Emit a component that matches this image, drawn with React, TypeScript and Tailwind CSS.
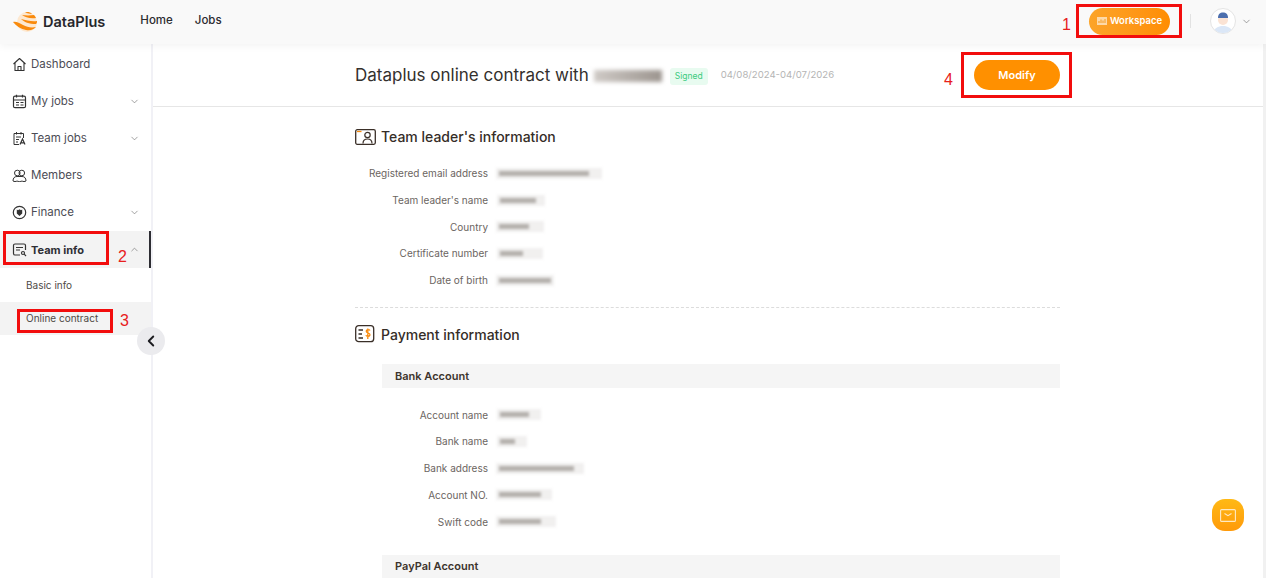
import { ReactNode } from 'react';
import { ChevronDown, ChevronLeft, ChevronUp } from 'lucide-react';

const font = "font-['Inter','Liberation_Sans',sans-serif]";

const HomeIcon = () => (
  <svg width="15" height="15" viewBox="0 0 15 15" fill="none" stroke="#333" strokeWidth="1.1">
    <path d="M1.5 7 7.5 1.5 13.5 7M3 5.8V13.5H12V5.8M6 13.5V9.5H9V13.5" strokeLinejoin="round" />
  </svg>
);

const JobsIcon = () => (
  <svg width="15" height="15" viewBox="0 0 15 15" fill="none" stroke="#333" strokeWidth="1.2">
    <rect x="1.5" y="2.2" width="12" height="11.5" rx="1.5" />
    <path d="M4.5 .8V3.5M10.5 .8V3.5M1.5 6H13.5M4 8.5H7M4 11H7M8.5 8.5H11.5M8.5 11H11.5" />
  </svg>
);

const TeamJobsIcon = () => (
  <svg width="15" height="15" viewBox="0 0 15 15" fill="none" stroke="#333" strokeWidth="1">
    <path d="M7 13.5H2V2.5H11.5V7M4.5 1V3.5M9 1V3.5M4 6H9M4 8.5H7M4 11H6" />
    <path d="M8 13.5 10.5 8 13 13.5M9 11.8H12" strokeWidth="1.2" />
  </svg>
);

const MembersIcon = () => (
  <svg width="15" height="15" viewBox="0 0 15 15" fill="none" stroke="#333" strokeWidth="1">
    <circle cx="5.3" cy="5" r="2.8" />
    <circle cx="9.8" cy="5" r="2.8" />
    <path d="M1 13c0-3 1.5-4.500 4-4.500h5c2.500 0 4 1.500 4 4.500-1 .7-3 .7-4 0-1 .7-4 .7-5 0-1 .7-3 .7-4 0Z" />
  </svg>
);

const FinanceIcon = () => (
  <svg width="15" height="15" viewBox="0 0 15 15" fill="none">
    <circle cx="7.500" cy="7.500" r="6.200" stroke="#333" strokeWidth="1.200" />
    <path d="M4.800 4.500 6 5.200 7.500 4.300 9 5.200 10.200 4.500V8.500L7.500 11 4.800 8.500Z" fill="#333" />
  </svg>
);

const TeamInfoIcon = () => (
  <svg width="15" height="15" viewBox="0 0 15 15" fill="none" stroke="#333" strokeWidth="1.200">
    <path d="M8 13H3a1.500 1.500 0 0 1-1.500-1.500v-8A1.500 1.500 0 0 1 3 2h9a1.500 1.500 0 0 1 1.500 1.500V8" />
    <path d="M4 5.500H11M4 8H8" />
    <circle cx="11" cy="11" r="1.500" />
    <path d="M12.200 12.200 14 14" />
  </svg>
);

const Logo = () => (
  <svg width="28" height="22" viewBox="0 0 28 22" fill="none" className="mt-[1px]">
    <circle cx="15" cy="11" r="10" fill="#fde8d0" />
    <path d="M1 11c3 4 8 7 13 8 5 1 8-1 10-3-5 1-9 0-13-2-4-2-7-4-10-3Z" fill="#f98a0c" />
    <path d="M9 8c3 3 8 5 15 5 1-1 1-2 1-3-5 1-11-1-16-2Z" fill="#f98a0c" />
    <path d="M10 4c3 2 8 4 14 3-.5-1-1-2-2-3-4 .5-8 .5-12 0Z" fill="#f98a0c" />
    <path d="M13 1.500c2 1 5 1.500 7 1-2-1.500-5-2-7-1Z" fill="#f98a0c" />
  </svg>
);

const TeamLeaderIcon = () => (
  <svg width="21" height="16" viewBox="0 0 21 16" fill="none">
    <rect x=".7" y=".7" width="19.600" height="14.600" rx="1.500" stroke="#3a2f28" strokeWidth="1.300" />
    <path d="M2 2.500H6.500" stroke="#f98a0c" strokeWidth="1.300" />
    <circle cx="12.500" cy="6" r="2.700" stroke="#3a2f28" strokeWidth="1.200" />
    <path d="M8 14.500c0-3 1.500-4.500 4.500-4.500s4.500 1.500 4.500 4.500" stroke="#3a2f28" strokeWidth="1.200" />
  </svg>
);

const PaymentIcon = () => (
  <svg width="20" height="18" viewBox="0 0 20 18" fill="none">
    <rect x=".7" y=".7" width="18" height="16" rx="3" stroke="#3a2f28" strokeWidth="1.300" />
    <path d="M3.500 5H8M3.500 9H7M3.500 13H8" stroke="#3a2f28" strokeWidth="1.300" />
    <path d="M15 5.500c-.5-1-3.500-1.300-3.800.6-.3 2.400 4 1.400 3.800 3.800-.2 2-3.500 1.700-4.200.4M12.800 3.500V14" stroke="#f98a0c" strokeWidth="1.300" />
  </svg>
);

// redacted values in the shot are just smudges
const Smudge = ({ width, offset = 0, strong = 22 }: { width: number; offset?: number; strong?: number }) => (
  <div className="relative h-[11px] bg-[#f1f0ef] blur-[1.500px]" style={{ width, marginLeft: offset }}>
    <div className="absolute left-[3px] top-[3px] h-[5px] bg-[#b3afab]" style={{ width: (width * strong) / 40 }} />
  </div>
);

const InfoRow = ({ label, labelWidth, width, offset, strong }: { label: string; labelWidth: string; width: number; offset?: number; strong?: number }) => (
  <div className="flex h-[26.700px] items-center">
    <div className={`${labelWidth} text-right text-[10px] leading-none text-[#6b6561]`}>{label}</div>
    <div className="ml-[8px]">
      <Smudge width={width} offset={offset} strong={strong} />
    </div>
  </div>
);

const NavItem = ({ icon, label, chevron, active }: { icon: ReactNode; label: string; chevron?: 'up' | 'down'; active?: boolean }) => (
  <div className={`flex h-[37px] items-center pl-[12px] ${active ? 'border-r-[2px] border-[#2d2d33] bg-[#f3f3f3] pr-[9px]' : 'pr-[11px]'}`}>
    <span className="flex w-[19px] shrink-0">{icon}</span>
    <span className={`flex-1 ${active ? 'mt-[1px] text-[11px] font-bold text-[#2f2f35]' : 'text-[11.500px] text-[#4c4c55]'}`}>{label}</span>
    {chevron === 'down' && <ChevronDown size={11} strokeWidth={1.500} className="text-[#777]" />}
    {chevron === 'up' && <ChevronUp size={11} strokeWidth={1.500} className="text-[#777]" />}
  </div>
);

const RedBox = ({ className }: { className: string }) => (
  <div className={`pointer-events-none absolute z-20 border-[3px] border-[#f20d0d] ${className}`} />
);

const RedNum = ({ className, children }: { className: string; children: ReactNode }) => (
  <div className={`absolute z-20 font-['Liberation_Sans',sans-serif] text-[16px] leading-none text-[#e8201c] ${className}`}>{children}</div>
);

export default function App() {
  return (
    <div className={`relative flex h-[578px] w-[1266px] flex-col overflow-hidden bg-white ${font}`}>
      <header className="z-10 flex h-[44px] shrink-0 items-center bg-[#f9f9f9] pb-[2px] pl-[12px] pr-[14px] shadow-[0_2px_8px_rgba(0,0,0,0.05)]">
        <Logo />
        <span className="ml-[3px] mt-[1px] text-[14.500px] font-semibold text-[#26262b]">DataPlus</span>
        <span className="ml-[35px] text-[11.500px] font-medium text-[#2b2b30]">Home</span>
        <span className="ml-[22px] text-[11.500px] font-medium text-[#2b2b30]">Jobs</span>
        <div className="ml-auto flex h-[27px] w-[81px] items-center justify-center gap-[3px] rounded-full bg-gradient-to-r from-[#fca428] to-[#ff8d00]">
          <svg width="10" height="8" viewBox="0 0 10 8">
            <rect width="10" height="8" fill="#fdd9a8" />
            <path d="M2 6V4M4 6V2.500M6 6V3.500M8 6V2" stroke="#f59a1c" strokeWidth="1" />
          </svg>
          <span className="text-[9.500px] font-semibold text-white">Workspace</span>
        </div>
        <div className="ml-[20px] h-[14px] w-px bg-[#e2e2e2]" />
        <div className="ml-[19px] flex h-[26px] w-[26px] items-end justify-center overflow-hidden rounded-full border border-[#e4e4e4] bg-white">
          <svg width="22" height="24" viewBox="0 0 22 24">
            <path d="M2 24c0-5 4-7 9-7s9 2 9 7Z" fill="#dbe7f7" />
            <circle cx="11" cy="11" r="5" fill="#fbe3d4" />
            <path d="M6 9c0-4 2-5.500 5-5.500S16 5 16 9Z" fill="#4d6fae" />
          </svg>
        </div>
        <ChevronDown size={11} strokeWidth={1.500} className="ml-[5px] text-[#777]" />
      </header>

      <div className="flex min-h-0 flex-1">
        <aside className="w-[153px] shrink-0 border-r-[2px] border-[#f1f1f6] pt-[2px]">
          <NavItem icon={<HomeIcon />} label="Dashboard" />
          <NavItem icon={<JobsIcon />} label="My jobs" chevron="down" />
          <NavItem icon={<TeamJobsIcon />} label="Team jobs" chevron="down" />
          <NavItem icon={<MembersIcon />} label="Members" />
          <NavItem icon={<FinanceIcon />} label="Finance" chevron="down" />
          <NavItem icon={<TeamInfoIcon />} label="Team info" chevron="up" active />
          <div className="flex h-[34px] items-center pl-[26px] text-[10px] text-[#4f4a46]">Basic info</div>
          <div className="flex h-[33px] items-center bg-[#f3f3f3] pl-[26px] text-[10px] text-[#4f4a46]">Online contract</div>
        </aside>

        <main className="min-w-0 flex-1 border-r-[3px] border-[#f1f1f1]">
          <div className="h-[63px] border-b border-[#e6e6e6] pl-[202px] pr-[203px]">
            <div className="flex h-[62px] items-center">
              <span className="mt-[2px] text-[17px] text-[#33302d]">Dataplus online contract with</span>
              <div className="ml-[5px] mt-[2px] h-[12px] w-[68px] bg-gradient-to-r from-[#cfcac6] to-[#9c958f] blur-[2px]" />
              <span className="ml-[8px] mt-[2px] rounded-[3px] bg-[#e8fbf0] px-[5px] py-[3px] text-[8.500px] leading-[11px] text-[#3ccb7f]">Signed</span>
              <span className="ml-[13px] mt-[1px] text-[9.600px] text-[#b5b5b5]">04/08/2024-04/07/2026</span>
              <div className="ml-auto flex h-[30px] w-[86px] items-center justify-center rounded-full bg-[#ff9000] text-[11px] font-semibold text-white">
                Modify
              </div>
            </div>
          </div>

          <div className="pl-[202px] pr-[203px]">
            <div className="flex h-[60px] items-center gap-[5px] pb-[1px]">
              <TeamLeaderIcon />
              <span className="text-[14px] font-medium text-[#352d27]">Team leader's information</span>
            </div>
            <div className="mt-[-7px] border-b border-dashed border-[#dcdcdc] pb-[14px]">
              <InfoRow label="Registered email address" labelWidth="w-[133px]" width={106} strong={34} />
              <InfoRow label="Team leader's name" labelWidth="w-[133px]" width={48} offset={1} strong={30} />
              <InfoRow label="Country" labelWidth="w-[133px]" width={48} strong={25} />
              <InfoRow label="Certificate number" labelWidth="w-[133px]" width={46} offset={1} strong={20} />
              <InfoRow label="Date of birth" labelWidth="w-[133px]" width={58} strong={36} />
            </div>
            <div className="flex h-[52px] items-center gap-[6px]">
              <PaymentIcon />
              <span className="text-[14px] font-medium text-[#352d27]">Payment information</span>
            </div>
            <div className="ml-[27px] mt-[4px]">
              <div className="flex h-[24px] items-center bg-[#f5f5f5] pl-[13px] text-[11px] font-semibold text-[#3d342d]">Bank Account</div>
              <div className="pt-[13px]">
                <InfoRow label="Account name" labelWidth="w-[106px]" width={44} offset={1} strong={26} />
                <InfoRow label="Bank name" labelWidth="w-[106px]" width={30} offset={1} strong={20} />
                <InfoRow label="Bank address" labelWidth="w-[106px]" width={88} strong={34} />
                <InfoRow label="Account NO." labelWidth="w-[106px]" width={56} strong={30} />
                <InfoRow label="Swift code" labelWidth="w-[106px]" width={60} strong={28} />
              </div>
              <div className="mt-[20px] flex h-[24px] items-center bg-[#f5f5f5] pb-[2px] pl-[13px] text-[11px] font-semibold text-[#3d342d]">PayPal Account</div>
            </div>
          </div>
        </main>
      </div>

      <div className="absolute left-[137px] top-[327px] flex h-[28px] w-[28px] items-center justify-center rounded-full bg-[#ebebee]">
        <ChevronLeft size={18} strokeWidth={2.500} className="text-[#1c1c20]" />
      </div>

      <div className="absolute left-[1212px] top-[499px] flex h-[32px] w-[32px] items-center justify-center rounded-[13px] bg-gradient-to-b from-[#ffb915] to-[#ff9a0a]">
        <svg width="16" height="13" viewBox="0 0 16 13" fill="none" stroke="#ffe9c4" strokeWidth="1.100">
          <rect x=".6" y=".6" width="14.800" height="11.800" rx="1" />
          <path d="M4.500 4.500 8 6.700 11.500 4.500" />
        </svg>
      </div>

      <RedBox className="left-[1076px] top-[4px] h-[34px] w-[106px]" />
      <RedBox className="left-[961px] top-[52px] h-[46px] w-[111px]" />
      <RedBox className="left-[3px] top-[231px] h-[34px] w-[106px]" />
      <RedBox className="left-[17px] top-[309px] h-[24px] w-[96px]" />
      <RedNum className="left-[1062px] top-[17px]">1</RedNum>
      <RedNum className="left-[944px] top-[72px]">4</RedNum>
      <RedNum className="left-[118px] top-[249px]">2</RedNum>
      <RedNum className="left-[120px] top-[313px]">3</RedNum>
    </div>
  );
}
